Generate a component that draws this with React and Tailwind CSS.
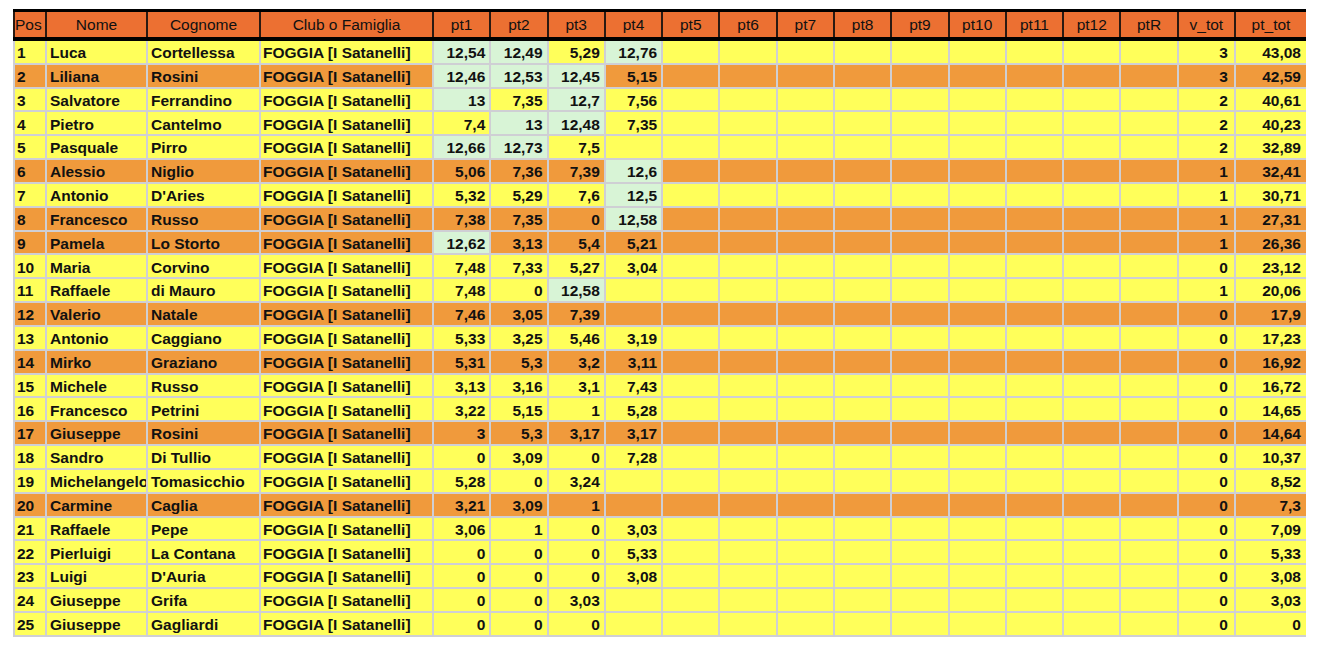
import React from 'react';

// Classifica - tabella punteggi
const header = ['Pos', 'Nome', 'Cognome', 'Club o Famiglia', 'pt1', 'pt2', 'pt3', 'pt4', 'pt5', 'pt6', 'pt7', 'pt8', 'pt9', 'pt10', 'pt11', 'pt12', 'ptR', 'v_tot', 'pt_tot'];

const rows = [
  ['Luca', 'Cortellessa', ['12,54', '12,49', '5,29', '12,76'], '3', '43,08'],
  ['Liliana', 'Rosini', ['12,46', '12,53', '12,45', '5,15'], '3', '42,59', true],
  ['Salvatore', 'Ferrandino', ['13', '7,35', '12,7', '7,56'], '2', '40,61'],
  ['Pietro', 'Cantelmo', ['7,4', '13', '12,48', '7,35'], '2', '40,23'],
  ['Pasquale', 'Pirro', ['12,66', '12,73', '7,5', ''], '2', '32,89'],
  ['Alessio', 'Niglio', ['5,06', '7,36', '7,39', '12,6'], '1', '32,41', true],
  ['Antonio', "D'Aries", ['5,32', '5,29', '7,6', '12,5'], '1', '30,71'],
  ['Francesco', 'Russo', ['7,38', '7,35', '0', '12,58'], '1', '27,31', true],
  ['Pamela', 'Lo Storto', ['12,62', '3,13', '5,4', '5,21'], '1', '26,36', true],
  ['Maria', 'Corvino', ['7,48', '7,33', '5,27', '3,04'], '0', '23,12'],
  ['Raffaele', 'di Mauro', ['7,48', '0', '12,58', ''], '1', '20,06'],
  ['Valerio', 'Natale', ['7,46', '3,05', '7,39', ''], '0', '17,9', true],
  ['Antonio', 'Caggiano', ['5,33', '3,25', '5,46', '3,19'], '0', '17,23'],
  ['Mirko', 'Graziano', ['5,31', '5,3', '3,2', '3,11'], '0', '16,92', true],
  ['Michele', 'Russo', ['3,13', '3,16', '3,1', '7,43'], '0', '16,72'],
  ['Francesco', 'Petrini', ['3,22', '5,15', '1', '5,28'], '0', '14,65'],
  ['Giuseppe', 'Rosini', ['3', '5,3', '3,17', '3,17'], '0', '14,64', true],
  ['Sandro', 'Di Tullio', ['0', '3,09', '0', '7,28'], '0', '10,37'],
  ['Michelangelo', 'Tomasicchio', ['5,28', '0', '3,24', ''], '0', '8,52'],
  ['Carmine', 'Caglia', ['3,21', '3,09', '1', ''], '0', '7,3', true],
  ['Raffaele', 'Pepe', ['3,06', '1', '0', '3,03'], '0', '7,09'],
  ['Pierluigi', 'La Contana', ['0', '0', '0', '5,33'], '0', '5,33'],
  ['Luigi', "D'Auria", ['0', '0', '0', '3,08'], '0', '3,08'],
  ['Giuseppe', 'Grifa', ['0', '0', '3,03', ''], '0', '3,03'],
  ['Giuseppe', 'Gagliardi', ['0', '0', '0', ''], '0', '0'],
];

const cols = 'grid-cols-[30px_99px_111px_171px_repeat(14,minmax(0,1fr))_70px]';

function isBest(v) {
  return v !== '' && parseFloat(v.replace(',', '.')) >= 12;
}

export default function App() {
  return (
    <div className="w-[1325px] h-[661px] bg-white pt-[9px] pl-[13px] font-['Liberation_Sans',Arial,sans-serif] text-[15.5px] text-[#111]">
      <div className="w-[1293px]">
        {/* Header */}
        <div className={`grid ${cols} gap-x-[2px] pl-[2px] bg-[#2a1a12] border-t-[3px] border-b-[4px] border-black`}>
          {header.map((h, i) => (
            <div
              key={h}
              className={`h-[25px] flex items-center pt-[1px] bg-[#ec7032] leading-none whitespace-nowrap overflow-hidden ${i === 0 ? 'justify-start' : 'justify-center'}`}
            >
              {h}
            </div>
          ))}
        </div>

        {/* Body */}
        <div className={`grid ${cols} auto-rows-[21.84px] gap-[2px] pl-[2px] pb-[2px] bg-[#cfcfd4] font-bold`}>
          {rows.map(([nome, cognome, pts, vtot, ptot, alt], r) => {
            const bg = alt ? 'bg-[#f09a3c]' : 'bg-[#ffff5a]';
            const cells = [];
            cells.push(<div key="p" className={`${bg} flex items-center pt-[2px] pl-[2px] leading-none`}>{r + 1}</div>);
            cells.push(<div key="n" className={`${bg} flex items-center pt-[2px] pl-[3px] leading-none whitespace-nowrap overflow-hidden`}>{nome}</div>);
            cells.push(<div key="c" className={`${bg} flex items-center pt-[2px] pl-[3px] leading-none whitespace-nowrap overflow-hidden`}>{cognome}</div>);
            cells.push(<div key="f" className={`${bg} flex items-center pt-[2px] pl-[2px] leading-none whitespace-nowrap overflow-hidden`}>FOGGIA [I Satanelli]</div>);
            pts.forEach((v, i) => {
              cells.push(
                <div key={'pt' + i} className={`${isBest(v) ? 'bg-[#d8f4d6]' : bg} flex items-center justify-end pt-[2px] pr-[4px] leading-none`}>
                  {v}
                </div>
              );
            });
            for (let i = 0; i < 9; i++) {
              cells.push(<div key={'e' + i} className={bg} />);
            }
            cells.push(<div key="v" className={`${bg} flex items-center justify-end pt-[2px] pr-[6px] leading-none`}>{vtot}</div>);
            cells.push(<div key="t" className={`${bg} flex items-center justify-end pt-[2px] pr-[5px] leading-none`}>{ptot}</div>);
            return <React.Fragment key={r}>{cells}</React.Fragment>;
          })}
        </div>
      </div>
    </div>
  );
}
